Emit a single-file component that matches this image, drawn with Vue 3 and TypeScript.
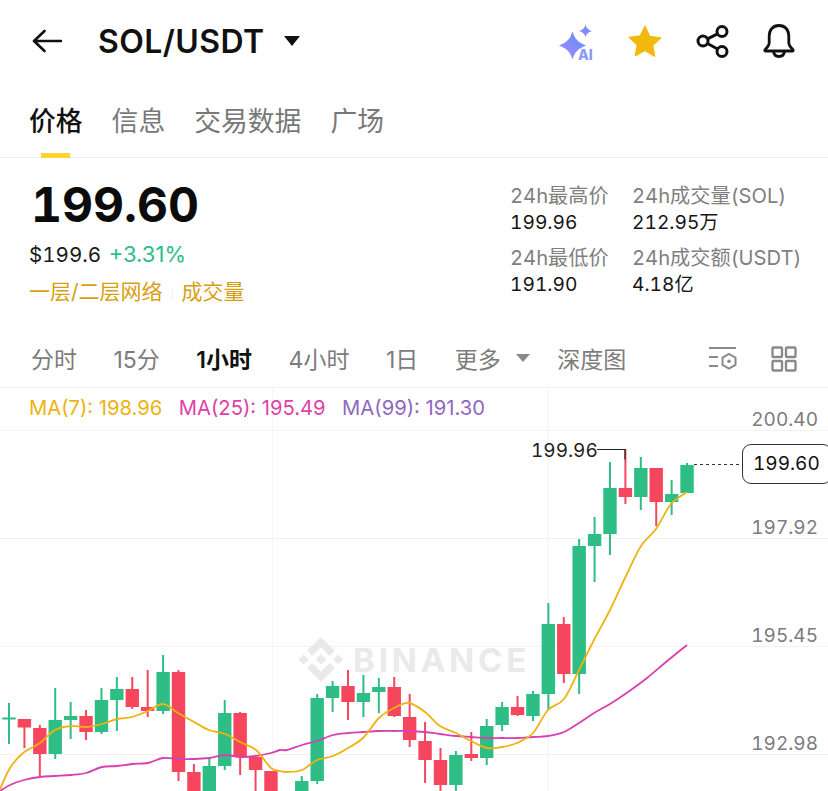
<script setup lang="ts">
interface Candle {
  x: number
  up: boolean
  hi: number
  lo: number
  top: number
  bot: number
}

// page y coordinates read off the chart, chart svg uses the same y range
const raw: [number, number, number, number, number][] = [
  [1, 703, 744, 717.5, 719.5],
  [0, 719, 748, 719, 727.5],
  [0, 725, 777, 728, 754],
  [1, 688, 759, 720, 754],
  [1, 702, 739, 716, 720],
  [0, 710, 740, 716, 732],
  [1, 688, 734, 700, 732],
  [1, 677, 731, 689, 700],
  [0, 677, 709, 689, 707],
  [0, 670, 717, 707, 711],
  [1, 655, 714, 672, 711],
  [0, 670, 781, 672, 772],
  [0, 764, 810, 772, 810],
  [1, 758, 810, 766, 810],
  [1, 700, 770, 713, 766],
  [0, 712, 775, 713, 757],
  [0, 757, 810, 757, 770],
  [0, 771, 810, 771, 810],
  [0, 800, 810, 800, 810],
  [1, 776, 810, 781, 810],
  [1, 694, 784, 698, 781],
  [1, 681, 712, 686, 698],
  [0, 670, 720, 686, 702],
  [1, 675, 717, 693, 702],
  [1, 678, 713, 687, 692],
  [0, 677, 717, 687, 716],
  [0, 694, 747, 717, 740],
  [0, 722, 783, 741, 760],
  [0, 748, 810, 760, 785],
  [1, 751, 810, 755, 785],
  [0, 732, 761, 754, 758],
  [1, 719, 765, 726, 758],
  [1, 702, 731, 707, 725],
  [0, 696, 716, 707, 715],
  [1, 691, 721, 694, 716],
  [1, 603, 710, 624, 694],
  [0, 617, 683, 624, 674],
  [1, 539, 694, 546, 674],
  [1, 517, 582, 534, 546],
  [1, 462, 555, 488, 534],
  [0, 449, 504, 488, 497],
  [1, 457, 510, 468, 497],
  [0, 468, 526, 468, 502],
  [1, 480, 515, 494, 502],
  [1, 463, 493, 465, 493],
]

const candles: Candle[] = raw.map((c, i) => ({
  x: 9 + i * 15.41,
  up: c[0] === 1,
  hi: c[1],
  lo: c[2],
  top: c[3],
  bot: c[4],
}))

const ma7Pts: [number, number][] = [
  [0, 789], [10, 768], [23, 753], [40, 743], [55, 730], [71, 726], [86, 727], [102, 724], [117, 719], [132, 717], [148, 711], [163, 704], [178, 713], [194, 722], [209, 730], [225, 734], [240, 742], [256, 750], [271, 768], [280, 771],
  [287, 772], [302, 770], [317, 760], [333, 756], [348, 748], [363, 738], [379, 718], [394, 708], [409, 703], [425, 712], [440, 726], [456, 733], [471, 741], [487, 748], [502, 747], [517, 743], [533, 733], [548, 710], [564, 699], [579, 670], [594, 640], [610, 610], [625, 578], [641, 546], [656, 529], [671, 504], [687, 492],
]

const ma25Pts: [number, number][] = [
  [0, 791], [10, 785], [24, 780], [40, 777], [55, 776], [71, 775], [86, 773], [102, 767], [117, 766], [132, 764], [148, 763], [163, 758], [178, 759], [194, 759], [209, 758], [225, 755], [240, 757], [256, 756], [271, 753], [280, 750],
  [287, 750], [302, 745], [317, 741], [333, 735], [348, 733], [363, 732], [379, 731], [394, 731], [409, 731], [425, 732], [440, 734], [456, 736], [471, 737], [487, 738], [502, 738], [517, 738], [533, 737], [548, 736], [564, 732], [579, 723], [594, 713], [610, 704], [628, 692], [647, 678], [666, 662], [687, 645],
]

// catmull-rom through the points, the MA lines are curved in the app
function smooth(pts: [number, number][]): string {
  let d = `M${pts[0][0]} ${pts[0][1]}`
  for (let i = 0; i < pts.length - 1; i++) {
    const p0 = pts[Math.max(i - 1, 0)]
    const p1 = pts[i]
    const p2 = pts[i + 1]
    const p3 = pts[Math.min(i + 2, pts.length - 1)]
    const c1x = p1[0] + (p2[0] - p0[0]) / 6
    const c1y = p1[1] + (p2[1] - p0[1]) / 6
    const c2x = p2[0] - (p3[0] - p1[0]) / 6
    const c2y = p2[1] - (p3[1] - p1[1]) / 6
    d += `C${c1x} ${c1y} ${c2x} ${c2y} ${p2[0]} ${p2[1]}`
  }
  return d
}

const ma7 = smooth(ma7Pts)
const ma25 = smooth(ma25Pts)

const tabs = ['信息', '交易数据', '广场']
const intervals = [
  { label: '分时' },
  { label: '15分' },
  { label: '1小时', active: true },
  { label: '4小时' },
  { label: '1日' },
]
const axisLabels = [
  { text: '200.40', y: 420 },
  { text: '197.92', y: 528 },
  { text: '195.45', y: 636 },
  { text: '192.98', y: 744 },
]
const gridY = [430, 538, 646, 754]
</script>

<template>
  <div class="screen">
    <header class="topbar">
      <svg class="back" width="30" height="24" viewBox="0 0 30 24" fill="none">
        <path d="M29 12H2M12.5 2 2 12l10.5 10" stroke="#111" stroke-width="2.6" stroke-linecap="round" stroke-linejoin="round" />
      </svg>
      <h1 class="pair">SOL/USDT</h1>
      <span class="pair-caret"></span>
      <div class="actions">
        <svg class="ai" width="38" height="44" viewBox="0 -3 38 44">
          <defs>
            <linearGradient id="aiGrad" x1="0" y1="1" x2="1" y2="0">
              <stop offset="0" stop-color="#a58cf5" />
              <stop offset="1" stop-color="#5f8cff" />
            </linearGradient>
          </defs>
          <path d="M14.500 9.500C16.800 17 20 20.300 28 23.500 20 26.700 16.800 30 14.500 37.500 12.200 30 9 26.700 1 23.500 9 20.300 12.200 17 14.500 9.500z" fill="url(#aiGrad)" />
          <path d="M27.500 2.500c1 3.800 2.300 5 6.500 6.500-4.200 1.500-5.500 2.700-6.500 6.500-1-3.800-2.300-5-6.500-6.500 4.200-1.500 5.500-2.700 6.500-6.500z" fill="url(#aiGrad)" />
          <text x="20" y="38" class="ai-text">AI</text>
        </svg>
        <svg class="star" width="36" height="34" viewBox="0 0 36 34">
          <path d="M18 2.500l4.700 10 10.800 1.400-8 7.500 2.100 10.700L18 26.300 8.400 31.600l2.100-10.700-8-7.500 10.800-1.400z" fill="#f0b90b" stroke="#f0b90b" stroke-width="1.500" stroke-linejoin="round" />
        </svg>
        <svg class="share" width="34" height="34" viewBox="0 0 34 34" fill="none" stroke="#111" stroke-width="3">
          <circle cx="7" cy="17" r="5" />
          <circle cx="26" cy="7.500" r="5" />
          <circle cx="26" cy="27.500" r="5" />
          <path d="M11.500 14.800 21.500 9.800M11.500 19.500l10 5.500" />
        </svg>
        <svg class="bell" width="34" height="36" viewBox="0 0 34 36" fill="none" stroke="#111" stroke-width="2.800" stroke-linejoin="round">
          <path d="M17 2.500c-6.200 0-9.800 4.500-9.800 10.500v6.500c0 3-1.600 4.800-4 7-.8.800-.3 1.500.5 1.500h26.600c.8 0 1.300-.7.500-1.500-2.400-2.200-4-4-4-7V13c0-6-3.600-10.500-9.800-10.500z" />
          <path d="M11.500 28.500c.4 3 2.700 5 5.500 5s5.100-2 5.500-5" />
        </svg>
      </div>
    </header>

    <nav class="tabs">
      <span class="tab tab-active">价格</span>
      <span v-for="t in tabs" :key="t" class="tab">{{ t }}</span>
    </nav>

    <section class="stats">
      <div class="stats-left">
        <div class="price">199.60</div>
        <div class="sub-price">$199.6 <span class="change">+3.31%</span></div>
        <div class="tags">
          <span>一层/二层网络</span>
          <i class="tag-sep"></i>
          <span>成交量</span>
        </div>
      </div>
      <div class="stats-right">
        <div class="cell"><div class="cell-label">24h最高价</div><div class="cell-value">199.96</div></div>
        <div class="cell"><div class="cell-label">24h成交量(SOL)</div><div class="cell-value">212.95万</div></div>
        <div class="cell"><div class="cell-label">24h最低价</div><div class="cell-value">191.90</div></div>
        <div class="cell"><div class="cell-label">24h成交额(USDT)</div><div class="cell-value">4.18亿</div></div>
      </div>
    </section>

    <div class="toolbar">
      <span v-for="item in intervals" :key="item.label" class="interval" :class="{ 'interval-active': item.active }">{{ item.label }}</span>
      <span class="interval">更多</span>
      <span class="more-caret"></span>
      <span class="depth">深度图</span>
      <svg class="tool-icon" width="30" height="26" viewBox="0 0 30 26" fill="none" stroke="#8a8a8a" stroke-width="2">
        <path d="M1 2h27M1 11h9M1 20h9" />
        <path d="M21 8l6.500 3.700v7.100L21 22.500l-6.500-3.700v-7.100z" />
        <circle cx="21" cy="15.300" r="1.800" fill="#8a8a8a" stroke="none" />
      </svg>
      <svg class="tool-icon grid-icon" width="26" height="26" viewBox="0 0 26 26" fill="none" stroke="#8a8a8a" stroke-width="2.400">
        <rect x="1.500" y="1.500" width="9.500" height="9.500" rx="1" />
        <rect x="15" y="1.500" width="9.500" height="9.500" rx="1" />
        <rect x="1.500" y="15" width="9.500" height="9.500" rx="1" />
        <rect x="15" y="15" width="9.500" height="9.500" rx="1" />
      </svg>
    </div>

    <div class="chart">
      <div class="legend">
        <span class="ma7">MA(7): 198.96</span>
        <span class="ma25">MA(25): 195.49</span>
        <span class="ma99">MA(99): 191.30</span>
      </div>

      <svg class="plot" width="828" height="403" viewBox="0 388 828 403">
        <line v-for="y in gridY" :key="y" x1="0" x2="828" :y1="y + 0.5" :y2="y + 0.5" stroke="#f2f2f2" />
        <line x1="272.500" x2="272.500" y1="388" y2="791" stroke="#f5f5f5" />
        <line x1="548.500" x2="548.500" y1="388" y2="791" stroke="#f5f5f5" />

        <g transform="translate(298.500 637) scale(0.355)" fill="#e9e9e9">
          <path d="M38.730 53.200 63.300 28.630l24.590 24.590 14.300-14.300L63.300 0 24.420 38.900zM0 63.310l14.300-14.300 14.310 14.300-14.310 14.300zM38.730 73.410 63.300 97.980l24.590-24.590 14.310 14.290-38.900 38.910-38.910-38.880zM97.990 63.310l14.300-14.300 14.320 14.300-14.310 14.300zM77.830 63.300 63.300 48.780 48.780 63.290 63.300 77.790z" />
        </g>
        <text x="353" y="672" class="watermark">BINANCE</text>

        <g v-for="(c, i) in candles" :key="i" :fill="c.up ? '#2ebd85' : '#f6465d'">
          <rect :x="c.x - 1" :y="c.hi" width="2" :height="c.lo - c.hi" />
          <rect :x="c.x - 6.700" :y="c.top" width="13.400" :height="c.bot - c.top" />
        </g>

        <path :d="ma25" fill="none" stroke="#d93fb0" stroke-width="1.800" />
        <path :d="ma7" fill="none" stroke="#eeb211" stroke-width="1.800" />

        <path d="M597 449.500h28v10" fill="none" stroke="#222" stroke-width="1.200" />
        <line x1="694" x2="743" y1="464.500" y2="464.500" stroke="#333" stroke-width="1" stroke-dasharray="3 3" />
      </svg>

      <span v-for="a in axisLabels" :key="a.text" class="axis-label" :style="{ top: a.y - 388 - 14 + 'px' }">{{ a.text }}</span>
      <span class="high-label">199.96</span>
      <span class="last-price">199.60</span>
    </div>
  </div>
</template>

<style scoped>
.screen {
  width: 828px;
  height: 791px;
  overflow: hidden;
  background: #fff;
  color: #111;
  font-family: Inter, "Noto Sans CJK SC", sans-serif;
  font-variant-numeric: tabular-nums;
}

.topbar {
  height: 82px;
  display: flex;
  align-items: center;
  padding: 0 32px;
  box-sizing: border-box;
}

.back {
  flex: none;
}

.pair {
  margin: 0 0 0 36px;
  font-size: 32px;
  font-weight: 600;
  letter-spacing: 0.4px;
  color: #111;
}

.pair-caret {
  margin-left: 20px;
  width: 0;
  height: 0;
  border-left: 8.500px solid transparent;
  border-right: 8.500px solid transparent;
  border-top: 10px solid #111;
}

.actions {
  margin-left: auto;
  display: flex;
  align-items: center;
}

.ai {
  margin-right: 31px;
}

.ai-text {
  font-size: 14px;
  font-weight: 800;
  fill: #8a9cf5;
  font-family: Inter, sans-serif;
}

.star {
  margin-right: 33px;
}

.share {
  margin-right: 32px;
}

.tabs {
  height: 76px;
  box-sizing: border-box;
  border-bottom: 1px solid #efefef;
  display: flex;
  gap: 29px;
  padding: 0 29px;
  align-items: flex-start;
}

.tab {
  position: relative;
  font-size: 26.800px;
  line-height: 38px;
  margin-top: 20px;
  color: #787878;
}

.tab-active {
  color: #111;
  font-weight: 500;
}

.tab-active::after {
  content: "";
  position: absolute;
  left: 12px;
  top: 51px;
  width: 29px;
  height: 5px;
  background: #fcd535;
}

.stats {
  height: 173px;
  display: flex;
  box-sizing: border-box;
}

.stats-left {
  flex: 1;
  padding: 19px 0 0 30px;
}

.price {
  font-size: 48px;
  font-weight: 700;
  line-height: 56px;
  margin-left: 1px;
  color: #0b0b0b;
}

.sub-price {
  margin-top: 7px;
  margin-left: -1px;
  font-size: 20.600px;
  line-height: 28px;
  color: #1a1a1a;
}

.change {
  margin-left: 2px;
  font-size: 22px;
  font-variant-numeric: proportional-nums;
  color: #2ebd85;
}

.tags {
  margin-top: 9px;
  display: flex;
  align-items: center;
  margin-left: -1px;
  font-size: 21px;
  line-height: 28px;
  color: #d89f16;
}

.tag-sep {
  width: 1px;
  height: 13px;
  margin: 0 9px;
  background: #efefef;
}

.stats-right {
  width: 318px;
  padding-top: 24px;
  display: grid;
  grid-template-columns: 122px 1fr;
  grid-auto-rows: 54px;
  row-gap: 8px;
}

.cell-label {
  font-size: 20.200px;
  line-height: 27px;
  color: #808080;
  white-space: nowrap;
}

.cell-value {
  font-size: 19.200px;
  line-height: 27px;
  color: #161616;
  white-space: nowrap;
}

.toolbar {
  height: 57px;
  box-sizing: border-box;
  border-bottom: 1px solid #f2f2f2;
  display: flex;
  align-items: center;
  padding: 0 31px 3px;
  gap: 36.500px;
  font-size: 23px;
  font-variant-numeric: proportional-nums;
  color: #7c7c7c;
}

.interval-active {
  color: #111;
  font-weight: 600;
}

.more-caret {
  margin-left: -21.500px;
  width: 0;
  height: 0;
  border-left: 7.500px solid transparent;
  border-right: 7.500px solid transparent;
  border-top: 8px solid #8a8a8a;
}

.depth {
  margin-left: -9px;
}

.tool-icon {
  flex: none;
  margin-left: auto;
  margin-top: 3px;
}

.grid-icon {
  margin-left: -3.500px;
}

.chart {
  position: relative;
  height: 403px;
}

.legend {
  position: relative;
  z-index: 1;
  display: flex;
  gap: 16.500px;
  padding-left: 29px;
  font-size: 20.200px;
  font-variant-numeric: proportional-nums;
  line-height: 39px;
}

.ma7 {
  color: #eeb211;
}

.ma25 {
  color: #e040a8;
}

.ma99 {
  color: #8e67c0;
}

.plot {
  position: absolute;
  left: 0;
  top: 0;
}

.watermark {
  font-size: 33px;
  font-weight: 700;
  letter-spacing: 3.800px;
  fill: #eaeaea;
  font-family: Inter, sans-serif;
}

.axis-label {
  position: absolute;
  right: 10px;
  font-size: 19px;
  line-height: 28px;
  color: #7c7c7c;
}

.high-label {
  position: absolute;
  left: 531px;
  top: 49px;
  font-size: 19px;
  line-height: 28px;
  color: #222;
}

.last-price {
  position: absolute;
  left: 742px;
  top: 56px;
  width: 90px;
  height: 40px;
  box-sizing: border-box;
  border: 1.500px solid #333;
  border-radius: 9px;
  padding-left: 10px;
  font-size: 19px;
  line-height: 37px;
  background: #fff;
  color: #111;
}
</style>

<style>
html,
body {
  margin: 0;
  overflow: hidden;
  background: #fff;
}
</style>
